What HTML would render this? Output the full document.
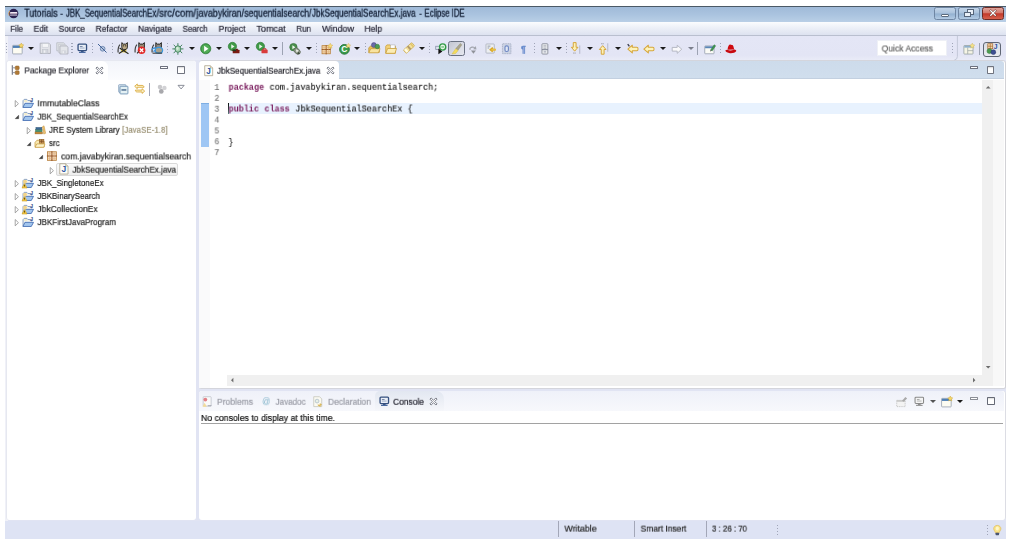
<!DOCTYPE html>
<html lang="en"><head><meta charset="utf-8"><title>Tutorials - JBK_SequentialSearchEx/src/com/javabykiran/sequentialsearch/JbkSequentialSearchEx.java - Eclipse IDE</title>
<style>
html,body{margin:0;padding:0;background:#fff}
body{width:1011px;height:544px;position:relative;overflow:hidden;font-family:"Liberation Sans",sans-serif}
div,span,svg{position:absolute;box-sizing:border-box}
.t{white-space:pre;line-height:14px;height:14px;transform-origin:0 50%;will-change:transform;-webkit-text-stroke:0.2px currentColor}
.m{font-family:'Liberation Mono',monospace;-webkit-text-stroke:0.12px currentColor}
.b{font-weight:bold;-webkit-text-stroke:0}
.h{-webkit-text-stroke:0.28px currentColor}
svg{overflow:visible}
.ds{width:1.4px;height:10px;background:repeating-linear-gradient(#a0a5b8 0 1.1px,transparent 1.1px 2.9px)}
.ss{width:1px;height:13px;background:#9da3b3}
.ar{width:0;height:0;border-left:3px solid transparent;border-right:3px solid transparent;border-top:3.2px solid #1a1a1a}
#w{left:0;top:0;width:1011px;height:544px;filter:blur(0.3px)}
#x{left:0;top:0;width:1011px;height:544px}
.g{left:0;top:0}
</style></head><body><div id="w">
<div style="left:5px;top:6px;width:1000.6px;height:533px;background:#e1e4f3"></div>
<div style="left:5px;top:6px;width:1001px;height:16.3px;background:linear-gradient(#a0bad8 0%,#aac3df 50%,#b9cfe6 100%);border-top:1px solid #4b5966"></div>
<div style="left:5px;top:22.3px;width:1001px;height:13.5px;background:linear-gradient(#fbfcfe 0%,#eef1f8 40%,#dde2f0 100%);border-bottom:1px solid #b9bfcf"></div>
<div style="left:5px;top:35.8px;width:1001px;height:24.5px;background:linear-gradient(#e4e6f6 0%,#e3e5f5 80%,#e9ebf7 100%)"></div>
<div style="left:5px;top:520.6px;width:1001px;height:18.2px;background:#dee3f4"></div>
<svg style="left:7.5px;top:8.1px" width="11.2" height="11.2" viewBox="0 0 16 16"><circle cx="8" cy="8" r="6.8" fill="#2a2050"/><path d="M1.500 10.800a7 7 0 0 1 1-6.600" stroke="#e8a04a" stroke-width="1.200" fill="none"/><rect x="2.800" y="5.700" width="10.600" height="1.500" rx="0.700" fill="#efe9f4"/><rect x="2.400" y="7.600" width="11.200" height="1.500" rx="0.700" fill="#e6cfe0"/><rect x="2.800" y="9.500" width="10.600" height="1.400" rx="0.700" fill="#efe9f4"/></svg>
<div style="left:933.5px;top:7.4px;width:22.0px;height:12.2px;border:1px solid #6f86a3;border-radius:2.5px;background:linear-gradient(#c3d5e9 0%,#aac2dc 48%,#92b0d0 52%,#b3cbe4 100%)"></div>
<div style="left:941px;top:14px;width:8px;height:3px;border:1px solid #5b6b7e;background:#fff;border-radius:1px"></div>
<div style="left:957.8px;top:7.4px;width:22.0px;height:12.2px;border:1px solid #6f86a3;border-radius:2.5px;background:linear-gradient(#c3d5e9 0%,#aac2dc 48%,#92b0d0 52%,#b3cbe4 100%)"></div>
<div style="left:967.4px;top:9.4px;width:6.2px;height:5.2px;border:1px solid #56657a;border-top-width:1.5px;background:#e9f0f8"></div>
<div style="left:964.4px;top:12px;width:6.2px;height:5.4px;border:1px solid #56657a;border-top-width:1.5px;background:#e9f0f8"></div>
<div style="left:982.1px;top:7.4px;width:22.4px;height:12.2px;border:1px solid #6d2b25;border-radius:2.5px;background:linear-gradient(#e0a39a 0%,#d4786b 45%,#c2392a 52%,#d6604d 100%)"></div>
<svg style="left:989.3px;top:9.4px" width="8" height="8" viewBox="0 0 16 16"><path d="M3.5 3.5l9 9M12.5 3.5l-9 9" stroke="#5a2a26" stroke-width="4.2" stroke-linecap="square"/><path d="M3.5 3.5l9 9M12.5 3.5l-9 9" stroke="#fff" stroke-width="2.6" stroke-linecap="square"/></svg>
<div style="left:5px;top:36px;width:2.5px;height:484.5px;background:#f0f1f8"></div>
<div style="left:6px;top:60.2px;width:189.8px;height:460.1px;background:#fff;border:1px solid #e6e8f0;border-right:none;border-bottom:none;border-radius:3px 3px 3px 3px"></div>
<div style="left:6.5px;top:60.7px;width:189.3px;height:19.3px;background:linear-gradient(#f3f5fa,#fbfcfe);border-radius:3px 3px 0 0"></div>
<div style="left:6.5px;top:60.7px;width:101.5px;height:19.3px;background:#fff;border-radius:3px 6px 0 0"></div>
<div style="left:198.5px;top:60.2px;width:807.1px;height:328.7px;background:#fff;border:1px solid #d4d5dc;border-left:0.6px solid #d9dcea;border-right:1.4px solid #d2d2d6;border-radius:3.5px 3.5px 2.5px 2.5px"></div>
<div style="left:199px;top:61px;width:805.3px;height:18px;background:linear-gradient(#cddbeb,#d0deed);border-radius:3px 3px 0 0;border-bottom:1px solid #c3d0e0"></div>
<div style="left:199px;top:61px;width:140px;height:18.5px;background:#fff;border-radius:3px 4px 0 0"></div>
<div style="left:199.1px;top:79.5px;width:11.4px;height:308.3px;background:#fafafb"></div>
<div style="left:229px;top:103px;width:753px;height:11.3px;background:#e8f2fe"></div>
<div style="left:201px;top:103px;width:8px;height:43.6px;background:#9ec6f4;border-top:1px solid #7eaee3"></div>
<div style="left:228.2px;top:103.2px;width:1.1px;height:10.6px;background:linear-gradient(#111,#2a3a3a 50%,#5c8c84)"></div>
<div style="left:982px;top:79.5px;width:11.2px;height:306.1px;background:#f0f0f0"></div>
<div style="left:993.2px;top:79.5px;width:11.0px;height:306.1px;background:#f8f8f8"></div>
<div style="left:227px;top:375.2px;width:755px;height:10.4px;background:#f0f0f0"></div>
<svg style="left:984.8px;top:84.2px" width="6.4" height="6.4" viewBox="0 0 16 16"><path d="M2 11l6-6 6 6z" fill="#6c6c6c"/></svg>
<svg style="left:984.7px;top:364.2px" width="6.4" height="6.4" viewBox="0 0 16 16"><path d="M2 5l6 6 6-6z" fill="#6c6c6c"/></svg>
<svg style="left:229.4px;top:377.0px" width="6.4" height="6.4" viewBox="0 0 16 16"><path d="M11 2l-6 6 6 6z" fill="#6c6c6c"/></svg>
<svg style="left:971.4px;top:377.0px" width="6.4" height="6.4" viewBox="0 0 16 16"><path d="M5 2l6 6-6 6z" fill="#6c6c6c"/></svg>
<div style="left:198.5px;top:390.6px;width:807.1px;height:129.7px;background:#fff;border-right:1.2px solid #dcdde4;border-radius:3px"></div>
<div style="left:198.5px;top:390.6px;width:805.9px;height:20.4px;background:linear-gradient(#eff1f9,#f7f8fc);border-radius:3px 3px 0 0"></div>
<div style="left:375px;top:391px;width:69px;height:20px;background:linear-gradient(#e2e7f1,#f6f7fb);border-radius:5px 8px 0 0"></div>
<div style="left:201px;top:423px;width:802px;height:1px;background:#a2a2a2"></div>
<div class="ds" style="left:6.0px;top:43.0px;height:12px"></div>
<svg style="left:11.9px;top:42.5px" width="11.8" height="11.8" viewBox="0 0 16 16"><rect x="0.8" y="3.2" width="13" height="11.6" rx="0.8" fill="#fdfcf2" stroke="#8c97a8" stroke-width="1"/><rect x="1.3" y="3.7" width="12" height="3" fill="#4f7fb5"/><path d="M12.6 0l1.1 2.2 2.3.4-1.7 1.7.4 2.4-2.1-1.1-2.1 1.1.4-2.4-1.7-1.7 2.3-.4z" fill="#f5d76a" stroke="#c9a23a" stroke-width="0.6"/></svg>
<div class="ar" style="left:27.9px;top:47.199999999999996px"></div>
<svg style="left:38.7px;top:42.4px" width="12.6" height="12.6" viewBox="0 0 16 16"><path d="M1.5 1.5h11l2 2v11h-13z" fill="#e4e5ea" stroke="#aeb0ba" stroke-width="1.2"/><rect x="4" y="2" width="8" height="4.6" fill="#f4f5f7" stroke="#c3c6cf" stroke-width="0.6"/><rect x="4.4" y="9.4" width="7" height="5" fill="#d3d6dd" stroke="#bcbfc8" stroke-width="0.6"/><rect x="6" y="10.6" width="2" height="3" fill="#f0f1f4"/></svg>
<svg style="left:55.7px;top:42.4px" width="12.6" height="12.6" viewBox="0 0 16 16"><path d="M1 1h8.6l1.6 1.6v8.6H1z" fill="#e6e8ec" stroke="#b4b7c0" stroke-width="1"/><path d="M3 3h8.6l1.6 1.6v8.6H3z" fill="#e6e8ec" stroke="#bfc2cb" stroke-width="0.9"/><path d="M5 5h8.6l1.6 1.6v8.6H5z" fill="#e3e5ea" stroke="#aeb0ba" stroke-width="1.1"/><rect x="7" y="10.6" width="6" height="4.2" fill="#d3d6dd"/><rect x="8.4" y="11.6" width="1.6" height="2.6" fill="#f0f1f4"/></svg>
<div class="ds" style="left:71.3px;top:43.0px;height:12px"></div>
<svg style="left:77.1px;top:42.8px" width="10.6" height="10.6" viewBox="0 0 16 16"><rect x="1.6" y="1.8" width="12.8" height="9.6" rx="1.4" fill="#e9eef6" stroke="#35507f" stroke-width="2"/><rect x="4.4" y="4.6" width="4" height="1.2" fill="#5b6f95"/><rect x="4.4" y="7" width="7" height="1.2" fill="#8a9bb9"/><rect x="6" y="12" width="4" height="1.6" fill="#35507f"/><rect x="3" y="13.4" width="10" height="1.8" rx="0.6" fill="#4a6aa0"/></svg>
<div class="ds" style="left:91.8px;top:43.0px;height:12px"></div>
<svg style="left:97.15px;top:43.35px" width="10.5" height="10.5" viewBox="0 0 16 16"><circle cx="8.6" cy="8.8" r="3.6" fill="#b8c6de" stroke="#5876a6" stroke-width="1.2"/><path d="M1.5 1.5l13 13" stroke="#3e5f95" stroke-width="1.5"/></svg>
<div class="ds" style="left:112.1px;top:43.0px;height:12px"></div>
<svg style="left:116.8px;top:42.2px" width="12.4" height="12.4" viewBox="0 0 16 16"><path d="M3.800 3.400C1.600 5.600 1.200 9.600 1.400 13.600" stroke="#3c3c3c" stroke-width="1.500" fill="none"/><path d="M6.200 6.600V0.800l2 1.900h3.200l2-1.900v5.800c0 2-1.400 3.400-3.600 3.400s-3.600-1.400-3.600-3.400z" fill="#b9a784" stroke="#1c1c1c" stroke-width="1.200" stroke-linejoin="round"/><circle cx="8.600" cy="5" r="0.700" fill="#111"/><circle cx="11.200" cy="5" r="0.700" fill="#111"/><path d="M4.400 8.400l4.400 3.600 3.600-2.600-.8 4.200-5.600-.4z" fill="#e2c63a"/><path d="M3.400 7.800L14.800 15.200M11.400 9.400L2.400 14.800" stroke="#2a2a20" stroke-width="1.500"/></svg>
<svg style="left:134.2px;top:42.2px" width="12.4" height="12.4" viewBox="0 0 16 16"><path d="M3.800 3.400C1.600 5.600 1.200 9.600 1.400 13.600" stroke="#3c3c3c" stroke-width="1.500" fill="none"/><path d="M6.200 6.600V0.800l2 1.900h3.200l2-1.900v5.800c0 2-1.400 3.400-3.600 3.400s-3.600-1.400-3.600-3.400z" fill="#9c8f78" stroke="#1c1c1c" stroke-width="1.200" stroke-linejoin="round"/><circle cx="9.800" cy="10.600" r="4.900" fill="#e12828"/><path d="M7.600 8.400l4.400 4.400M12 8.400l-4.400 4.400" stroke="#fff" stroke-width="1.700"/><path d="M4 14.600l2-2.200" stroke="#2a2a20" stroke-width="1.400"/></svg>
<svg style="left:151.2px;top:42.2px" width="12.4" height="12.4" viewBox="0 0 16 16"><path d="M3.800 3.400C1.600 5.600 1.200 9.600 1.400 13.600" stroke="#3c3c3c" stroke-width="1.500" fill="none"/><path d="M6.200 6.600V0.800l2 1.900h3.200l2-1.900v5.800c0 2-1.400 3.400-3.600 3.400s-3.600-1.400-3.600-3.400z" fill="#8f8a84" stroke="#1c1c1c" stroke-width="1.200" stroke-linejoin="round"/><path d="M1.400 10.400a2.800 2.800 0 0 1 5-1.600" stroke="#3d8fd8" stroke-width="1.700" fill="none"/><ellipse cx="10.200" cy="10.600" rx="4.800" ry="3.800" fill="#a9a08c" stroke="#3d9ae0" stroke-width="1.600"/><path d="M2 14.400h12.400" stroke="#2a2a2a" stroke-width="1.300"/><path d="M3 12.400l3-1.600" stroke="#3d8fd8" stroke-width="1.500"/></svg>
<div class="ds" style="left:166.5px;top:43.0px;height:12px"></div>
<svg style="left:172.1px;top:42.7px" width="11.8" height="11.8" viewBox="0 0 16 16"><g stroke="#3d7f5a" stroke-width="1.3" stroke-linecap="round"><path d="M8 0.8v3M8 12.6v2.8M1 8h3M12 8h3M2.6 2.8l2.6 2.6M13.4 2.8l-2.6 2.6M2.6 13.4l2.6-2.8M13.4 13.4l-2.6-2.8"/></g><ellipse cx="8" cy="8.2" rx="3.9" ry="4.4" fill="#a9d3b4" stroke="#3d7f5a" stroke-width="1.2"/><ellipse cx="7.4" cy="7.4" rx="1.6" ry="2" fill="#d8eedd"/></svg>
<div class="ar" style="left:188.6px;top:47.199999999999996px"></div>
<svg style="left:199.9px;top:42.7px" width="11.4" height="11.4" viewBox="0 0 16 16"><circle cx="8" cy="8" r="7.2" fill="#3f9a47" stroke="#2d7a36" stroke-width="1"/><circle cx="8" cy="8" r="5.6" fill="#52ad57"/><path d="M5.8 3.8l6 4.2-6 4.2z" fill="#fff"/></svg>
<div class="ar" style="left:216.4px;top:47.199999999999996px"></div>
<svg style="left:227.5px;top:42.3px" width="11.8" height="11.8" viewBox="0 0 16 16"><circle cx="6" cy="6" r="5.6" fill="#3f9a47" stroke="#2d7a36" stroke-width="0.9"/><path d="M4.4 3l4.4 3-4.4 3z" fill="#eaf6ea"/><rect x="6.4" y="10.6" width="9.2" height="4.8" rx="0.6" fill="#7a1b12"/><rect x="6.2" y="10.2" width="4.6" height="2.2" fill="#1d3a1f"/><rect x="10.4" y="9.2" width="3" height="1.6" fill="#5a1610"/></svg>
<div class="ar" style="left:244px;top:47.199999999999996px"></div>
<svg style="left:255.9px;top:42.3px" width="11.8" height="11.8" viewBox="0 0 16 16"><circle cx="6" cy="6" r="5.6" fill="#3f9a47" stroke="#2d7a36" stroke-width="0.9"/><path d="M4.4 3l4.4 3-4.4 3z" fill="#eaf6ea"/><rect x="7.4" y="10.2" width="8.4" height="5.2" rx="1.2" fill="#d93b3b"/><path d="M9.6 10.4v-1.2h4v1.2" stroke="#c02e2e" stroke-width="1.3" fill="none"/></svg>
<div class="ar" style="left:272px;top:47.199999999999996px"></div>
<div class="ss" style="left:282.1px;top:41.699999999999996px;height:13.4px"></div>
<svg style="left:289.1px;top:42.5px" width="11.8" height="11.8" viewBox="0 0 16 16"><circle cx="6" cy="5.6" r="5" fill="#4a8f4c" stroke="#356f3a" stroke-width="0.9"/><path d="M4.6 3l4 2.8-4 2.8z" fill="#eef7ee"/><ellipse cx="11" cy="11" rx="5" ry="3.4" transform="rotate(45 11 11)" fill="#8f9a8a" stroke="#566050" stroke-width="0.9"/><path d="M9.4 8.6l3.8 1.8-3 2.6z" fill="#f4f6f2"/><path d="M13 12l2 3h-4z" fill="#3d4a3a"/></svg>
<div class="ar" style="left:305.6px;top:47.199999999999996px"></div>
<div class="ds" style="left:315.5px;top:43.0px;height:12px"></div>
<svg style="left:320.5px;top:42.5px" width="11.8" height="11.8" viewBox="0 0 16 16"><rect x="1.4" y="3.6" width="11.2" height="11" fill="#f6dcb4" stroke="#b8803a" stroke-width="1.1"/><path d="M1 8.8h12M7 3v12.4" stroke="#9a5a22" stroke-width="1.3"/><path d="M1.4 6h11M4.2 3.6v11M10 3.6v11M1.4 12h11" stroke="#d8a266" stroke-width="0.6"/><path d="M12.6 0.4l1.1 2.2 2.3.4-1.7 1.7.4 2.4-2.1-1.1-2.1 1.1.4-2.4-1.7-1.7 2.3-.4z" fill="#f7dc7a" stroke="#d1a944" stroke-width="0.6"/></svg>
<svg style="left:338.7px;top:42.5px" width="11.8" height="11.8" viewBox="0 0 16 16"><circle cx="7.4" cy="8.6" r="6.6" fill="#3a9c4a" stroke="#1f6f34" stroke-width="1.2"/><text x="3.200" y="12.800" font-family="Liberation Sans, sans-serif" font-weight="bold" font-size="11.500" fill="#fff">C</text><path d="M12.8 0.4l1 2 2.1.3-1.5 1.5.4 2.2-2-1-2 1 .4-2.2-1.5-1.5 2.1-.3z" fill="#f7e08a" stroke="#cfae4a" stroke-width="0.5"/></svg>
<div class="ar" style="left:354.4px;top:47.199999999999996px"></div>
<div class="ds" style="left:364.5px;top:43.0px;height:12px"></div>
<svg style="left:368.2px;top:42.2px" width="12.4" height="12.4" viewBox="0 0 16 16"><path d="M1 7.4l2.4-2.2h4l1.4 1.4h5.8v6.8H1z" fill="#e8bf5a" stroke="#b98e2c" stroke-width="0.9"/><path d="M1 14l2.6-5.4h12L13.4 14z" fill="#f8e3a0" stroke="#c59a36" stroke-width="0.9"/><circle cx="7.6" cy="4" r="3.2" fill="#6a6aa8" stroke="#4b4b86" stroke-width="0.7"/><circle cx="12" cy="5.8" r="2.9" fill="#4f9c52" stroke="#2f7a38" stroke-width="0.7"/></svg>
<svg style="left:384.7px;top:42.8px" width="11.8" height="11.8" viewBox="0 0 16 16"><path d="M1 4.4l1.6-1.8h4.2l1.4 1.6h6v9.6H1z" fill="#f3d27a" stroke="#c79a30" stroke-width="1"/><rect x="7.6" y="2.6" width="6" height="5" fill="#fdfdfd" stroke="#a8a8a8" stroke-width="0.7"/><path d="M1 14l2.6-6.6h12L13.6 14z" fill="#fbecb4" stroke="#c79a30" stroke-width="1"/></svg>
<svg style="left:403.0px;top:42.4px" width="12" height="12" viewBox="0 0 16 16"><g transform="rotate(-42 8 8)"><rect x="0.4" y="5" width="15.2" height="6" rx="1.2" fill="#f5e19a" stroke="#c4a550" stroke-width="0.9"/><rect x="1.6" y="5.4" width="3" height="5.2" fill="#fffbe6"/><rect x="7" y="5" width="2.6" height="6" fill="#b39a6a"/><rect x="12.4" y="5.4" width="2" height="5.2" fill="#e2c56a"/></g></svg>
<div class="ar" style="left:419.4px;top:47.199999999999996px"></div>
<div class="ds" style="left:428.9px;top:43.0px;height:12px"></div>
<svg style="left:434.5px;top:42.5px" width="11.8" height="11.8" viewBox="0 0 16 16"><rect x="1" y="4.4" width="6" height="4.4" fill="#dfe3ee" stroke="#7f8aa3" stroke-width="1"/><circle cx="10.4" cy="5.4" r="4.2" fill="#e6f5e4" stroke="#2f9a45" stroke-width="1.9"/><path d="M8.6 5.4h3.6" stroke="#2f9a45" stroke-width="1.2"/><path d="M4.6 7.4l5.4 4-5.4 4z" fill="#111"/></svg>
<div style="left:448.2px;top:41px;width:16.8px;height:14.8px;border:1.2px solid #6a7182;border-radius:2.5px;background:linear-gradient(135deg,#c3c6d1,#dddfe8 70%,#e4e6ee)"></div>
<svg style="left:451.3px;top:42.7px" width="11.4" height="11.4" viewBox="0 0 16 16"><path d="M13 0.6l2.2 2-5.4 7.6-3-2.4z" fill="#a9a48c" stroke="#8a866e" stroke-width="0.6"/><path d="M6.600 8l3.400 2.600-3.600 4.200-5 .6z" fill="#f4dc5c" stroke="#d2b63c" stroke-width="0.6"/></svg>
<svg style="left:468.3px;top:43.5px" width="10.6" height="10.6" viewBox="0 0 16 16"><path d="M2 6.4c2-3 6-3.4 8.4-1.6l1.4-1.6 1 5-5-.4 1.4-1.6c-2-1.2-4.4-.8-5.6.8z" fill="#a2a5ad"/><path d="M4.400 9.800h7.600l-3.800 4.800z" fill="#8f9299"/><circle cx="3" cy="7.400" r="1.500" fill="#b4b7bf"/></svg>
<svg style="left:484.7px;top:42.7px" width="11.4" height="11.4" viewBox="0 0 16 16"><rect x="1.4" y="1.400" width="11.600" height="12.800" rx="0.8" fill="#eceef2" stroke="#a2a8b4" stroke-width="1"/><path d="M3.600 4.400h4M3.600 7h2.400" stroke="#7d879a" stroke-width="1.100"/><path d="M15 9.400H9.400M11 6.600L7.600 9.400l3.400 2.800" stroke="#d8a626" stroke-width="2.400" fill="none"/><path d="M9 8.200h6v2.400H9z" fill="#e9bf3e"/></svg>
<svg style="left:501.3px;top:42.7px" width="11.4" height="11.4" viewBox="0 0 16 16"><rect x="2" y="1" width="12" height="14" rx="0.6" fill="#ccd3e4" stroke="#9ba4ba" stroke-width="1" stroke-dasharray="1.6 0.8"/><rect x="5.600" y="4" width="4.800" height="8" rx="2" fill="#dfe6f5" stroke="#7089c4" stroke-width="1.6"/></svg>
<span class="t" style="left:521px;top:42.2px;font-size:8.6px;font-weight:bold;color:#6589cb;-webkit-text-stroke:0.3px #6589cb">¶</span>
<div class="ds" style="left:533.9px;top:43.0px;height:12px"></div>
<svg style="left:539.1px;top:42.5px" width="11.8" height="11.8" viewBox="0 0 16 16"><rect x="4" y="1" width="8" height="14" rx="1" fill="#eceef1" stroke="#7f8491" stroke-width="1.1"/><path d="M6 4h4M6 7h4" stroke="#7f8491" stroke-width="1"/><path d="M4 9h8" stroke="#70778a" stroke-width="1.2"/><rect x="6.4" y="10.6" width="3.2" height="2.4" fill="#b9bdc8"/></svg>
<div class="ar" style="left:555.6px;top:47.199999999999996px"></div>
<div class="ds" style="left:565.5px;top:43.0px;height:12px"></div>
<svg style="left:569.1px;top:42.1px" width="11.8" height="11.8" viewBox="0 0 16 16"><path d="M5.800 0.800h3.800v6.400h2.600L7.700 12.400 3.200 7.200h2.600z" fill="#fdf1b4" stroke="#d4a336" stroke-width="1.300" stroke-linejoin="round"/><path d="M6 15h3.600" stroke="#555" stroke-width="1" stroke-dasharray="1 0.800"/><path d="M14.600 4.600v11.400" stroke="#a3a8b8" stroke-width="1"/></svg>
<div class="ar" style="left:587px;top:47.199999999999996px"></div>
<svg style="left:596.9px;top:42.7px" width="11.8" height="11.8" viewBox="0 0 16 16"><path d="M5.800 15.200h3.800V8.800h2.600L7.700 3.600 3.200 8.800h2.600z" fill="#fdf1b4" stroke="#d4a336" stroke-width="1.300" stroke-linejoin="round"/><path d="M6 1h3.600" stroke="#555" stroke-width="1" stroke-dasharray="1 0.800"/><path d="M14.600 0.400v11.400" stroke="#a3a8b8" stroke-width="1"/></svg>
<div class="ar" style="left:615px;top:47.199999999999996px"></div>
<svg style="left:626.5px;top:42.5px" width="11.8" height="11.8" viewBox="0 0 16 16"><path d="M1.200 8.200L7.200 3v2.800h6c1.200 0 1.800 1 1.800 2.400s-.6 2.400-1.800 2.400h-6v2.800z" fill="#fdf3ba" stroke="#d6a63a" stroke-width="1.400" stroke-linejoin="round"/><path d="M1 1.600l2.200 3" stroke="#3a3a4a" stroke-width="1.800"/></svg>
<svg style="left:643.1px;top:42.5px" width="11.8" height="11.8" viewBox="0 0 16 16"><path d="M1.200 8.200L7.200 3v2.800h6c1.200 0 1.800 1 1.800 2.400s-.6 2.400-1.800 2.400h-6v2.800z" fill="#fdf3ba" stroke="#d6a63a" stroke-width="1.400" stroke-linejoin="round"/></svg>
<div class="ar" style="left:659.6px;top:47.199999999999996px"></div>
<svg style="left:671.1px;top:42.5px" width="11.8" height="11.8" viewBox="0 0 16 16"><path d="M14.6 8.4L8.4 3v3H1.6v5h6.8v3z" fill="#f9f9fb" stroke="#b0b3be" stroke-width="1.200" stroke-linejoin="round"/></svg>
<div class="ar" style="left:687.6px;top:47.199999999999996px;border-top-color:#7b7f8c"></div>
<div class="ss" style="left:697.3px;top:41.699999999999996px;height:13.4px"></div>
<svg style="left:703.7px;top:42.9px" width="11.8" height="11.8" viewBox="0 0 16 16"><rect x="1" y="4" width="12.6" height="10.6" rx="0.8" fill="#fbfbf6" stroke="#8e98a8" stroke-width="1"/><rect x="1.5" y="4.5" width="11.6" height="2.6" fill="#5b86b8"/><path d="M9 9.400l4.800-7 2 1.400-4.600 6.800z" fill="#3d9650" stroke="#276f38" stroke-width="0.6"/><path d="M9 9.400l-.6 2.200 2-1z" fill="#222"/></svg>
<div class="ds" style="left:719.9px;top:43.0px;height:12px"></div>
<svg style="left:724.8px;top:42.6px" width="11.6" height="11.6" viewBox="0 0 16 16"><path d="M3.6 9.400c.2-3.800 1.400-6.800 3.200-7.200 1.200-.2 1.800.8 3 .6 1.400-.2 2.200 2.600 2.800 6z" fill="#cf0a10"/><path d="M0.400 10.400c1.600-1.400 3-1.400 3.600-.6 2.400 1 6 .6 8.600-.800 1.600-.2 3 1 3 2-1.400 2.400-5.600 3.400-8.800 3-3-.4-6-1.800-6.400-3.600z" fill="#c80a10"/></svg>
<div style="left:877.4px;top:40.2px;width:70.0px;height:15.4px;background:#fff;border:0.6px solid #eef0f6"></div>
<div class="ds" style="left:952.1px;top:43.0px;height:12px"></div>
<svg style="left:954px;top:36px" width="6" height="24" viewBox="0 0 6 24"><path d="M3.4 0v20.500q0 3 -3 3.500" stroke="#c3c8d8" stroke-width="1" fill="none"/></svg>
<svg style="left:962.5px;top:42.9px" width="11.8" height="11.8" viewBox="0 0 16 16"><rect x="1.2" y="3.4" width="12.400" height="11.600" rx="0.8" fill="#f6f5e6" stroke="#8f9a9a" stroke-width="1"/><rect x="1.7" y="3.9" width="11.400" height="2.400" fill="#8fb0cf"/><path d="M6.400 6.300v8.700M6.400 10.400h7.200" stroke="#9aa3a3" stroke-width="1"/><path d="M12.600 0.200l1.100 2.200 2.300.4-1.700 1.700.4 2.400-2.100-1.100-2.100 1.100.4-2.400-1.700-1.700 2.300-.4z" fill="#f5e28a" stroke="#cdb457" stroke-width="0.6"/></svg>
<div class="ss" style="left:979.1px;top:42.8px;height:12px"></div>
<div style="left:983.4px;top:42px;width:17.2px;height:14.6px;border:1px solid #5f6674;border-radius:3px;background:linear-gradient(#dadde5,#e9ebf1)"></div>
<svg style="left:986.0px;top:43.3px" width="12" height="12" viewBox="0 0 16 16"><rect x="2.400" y="1" width="6.600" height="6.600" fill="#f3d9b0" stroke="#a5642a" stroke-width="0.9"/><path d="M2.400 4.300h6.600M5.700 1v6.600" stroke="#a5642a" stroke-width="0.9"/><text x="10.200" y="7.600" font-family="Liberation Sans, sans-serif" font-weight="bold" font-size="9" fill="#2c4f9e">J</text><circle cx="4.600" cy="10.800" r="3.300" fill="#4c9b50" stroke="#2d7535" stroke-width="0.700"/><circle cx="9.800" cy="12.200" r="3.200" fill="#3e4f93" stroke="#2b3870" stroke-width="0.700"/></svg>
<svg style="left:11px;top:65px" width="10" height="10" viewBox="0 0 10 10"><path d="M1.300 0.300v9.500" stroke="#6c6f7c" stroke-width="1.100"/><path d="M1.300 2.800h3M1.300 7.600h3" stroke="#8a8d98" stroke-width="0.900"/><rect x="4.200" y="1" width="4" height="3.700" rx="1" fill="#b07a36" stroke="#94642a" stroke-width="0.500"/><rect x="4.200" y="5.800" width="4" height="3.700" rx="1" fill="#b07a36" stroke="#94642a" stroke-width="0.500"/></svg>
<svg style="left:95.5px;top:67.0px" width="7" height="7" viewBox="0 0 16 16"><path transform="rotate(45 8 8)" d="M6.100 -1.600h3.800v7.700h7.700v3.800h-7.700v7.700h-3.800v-7.700h-7.700v-3.800h7.700z" fill="#fbfbfd" stroke="#6c707a" stroke-width="1.900" stroke-linejoin="round"/></svg>
<div style="left:160px;top:66.2px;width:8px;height:2.8px;border:1px solid #6d717e;background:#fff;border-radius:0.5px"></div>
<div style="left:177.3px;top:65.9px;width:7.3px;height:8.2px;border:1px solid #70747f;border-top-width:1.7px;background:linear-gradient(#d8d8d8 0,#fff 30%);border-radius:0.8px"></div>
<svg style="left:117.7px;top:83.7px" width="10.6" height="10.6" viewBox="0 0 16 16"><rect x="1" y="1" width="11" height="11.600" rx="1" fill="#dfe9f3" stroke="#6f8fb0" stroke-width="1"/><rect x="3" y="3.400" width="12" height="11.600" rx="1" fill="#e4f1f4" stroke="#5f86aa" stroke-width="1.200"/><rect x="5.200" y="8" width="7.400" height="2" fill="#3d5f86"/></svg>
<svg style="left:133.9px;top:83.3px" width="11.4" height="11.4" viewBox="0 0 16 16"><path d="M1 4.600L4.600 1.400v2h6.800c2 0 2.600 1.200 2.600 2.600h-9.400v2z" fill="#fdf4cc" stroke="#d8a636" stroke-width="1.200" stroke-linejoin="round"/><path d="M15 11.400l-3.600 3.200v-2H4.600c-2 0-2.600-1.200-2.600-2.600h9.400v-2z" fill="#fdf4cc" stroke="#d8a636" stroke-width="1.200" stroke-linejoin="round"/></svg>
<div class="ss" style="left:149.1px;top:82.9px;height:13px;background:#a3a7b8"></div>
<svg style="left:157.4px;top:84.4px" width="10.4" height="10.4" viewBox="0 0 16 16"><circle cx="4.600" cy="4.600" r="3.400" fill="#c9c9cc"/><circle cx="11.400" cy="6" r="3.400" fill="#d2d2d5"/><circle cx="6.600" cy="11.400" r="3.600" fill="#a8a8ac"/></svg>
<svg style="left:176.9px;top:83.1px" width="8.2" height="8.2" viewBox="0 0 16 16"><path d="M2 4.600h12l-6 7z" fill="#fff" stroke="#7a7e8a" stroke-width="1.700" stroke-linejoin="round"/></svg>
<div style="left:55.6px;top:163.15px;width:122.4px;height:12.6px;border:1px solid #d9d9d9;border-radius:2px;background:linear-gradient(#fbfbfb,#eeeeee)"></div>
<svg style="left:13.4px;top:100.4px" width="7.4" height="7.4" viewBox="0 0 16 16"><path d="M4.800 1.200l7 6.800-7 6.800z" fill="#fff" stroke="#8e8e8e" stroke-width="1.700" stroke-linejoin="round"/></svg>
<svg style="left:22.1px;top:96.9px" width="11.8" height="11.8" viewBox="0 0 16 16"><path d="M1.400 13.600V5l1.600-1.800h3.600l1.400 1.600h5v2.600" fill="#f4f6f4" stroke="#6f8db8" stroke-width="1.100"/><path d="M3 4.600h3.400l1 1.400H3z" fill="#f3e3a4"/><path d="M1.200 14.200l2.800-5.600h11.600l-3 5.600z" fill="#a3c6ee" stroke="#456fb4" stroke-width="1.200" stroke-linejoin="round"/><text x="11" y="6.400" font-family="Liberation Sans, sans-serif" font-size="8.400" fill="#3f5890" stroke="#3f5890" stroke-width="0.300">J</text></svg>
<svg style="left:14.2px;top:114.1px" width="5.6" height="5.6" viewBox="0 0 16 16"><path d="M13.400 3.400v10h-10z" fill="#404040" stroke="#262626" stroke-width="1"/></svg>
<svg style="left:22.1px;top:110.2px" width="11.8" height="11.8" viewBox="0 0 16 16"><path d="M1.400 13.600V5l1.600-1.800h3.600l1.400 1.600h5v2.600" fill="#f4f6f4" stroke="#6f8db8" stroke-width="1.100"/><path d="M3 4.600h3.400l1 1.400H3z" fill="#f3e3a4"/><path d="M1.200 14.200l2.800-5.600h11.600l-3 5.600z" fill="#a3c6ee" stroke="#456fb4" stroke-width="1.200" stroke-linejoin="round"/><text x="11" y="6.400" font-family="Liberation Sans, sans-serif" font-size="8.400" fill="#3f5890" stroke="#3f5890" stroke-width="0.300">J</text></svg>
<svg style="left:25.4px;top:126.95px" width="7.4" height="7.4" viewBox="0 0 16 16"><path d="M4.800 1.200l7 6.800-7 6.800z" fill="#fff" stroke="#8e8e8e" stroke-width="1.700" stroke-linejoin="round"/></svg>
<svg style="left:33.5px;top:123.45px" width="11.8" height="11.8" viewBox="0 0 16 16"><rect x="1.400" y="12" width="10" height="2.800" fill="#c08a3e" stroke="#94621e" stroke-width="0.600"/><rect x="2" y="9" width="9" height="2.800" fill="#4a9574" stroke="#2f6f50" stroke-width="0.600"/><rect x="2.600" y="6" width="8" height="2.800" fill="#3c6a96" stroke="#284c70" stroke-width="0.600"/><path d="M11.400 5.200l2.200-1.400 2.200 10.200-2.600 1z" fill="#ecc070" stroke="#c2923a" stroke-width="0.700"/></svg>
<svg style="left:26.2px;top:140.6px" width="5.6" height="5.6" viewBox="0 0 16 16"><path d="M13.400 3.400v10h-10z" fill="#404040" stroke="#262626" stroke-width="1"/></svg>
<svg style="left:33.7px;top:136.7px" width="11.8" height="11.8" viewBox="0 0 16 16"><path d="M1.400 13.600V7.400l2.600-3h3.600l1.200 1.400h5v7.800z" fill="#f9e8b0" stroke="#c99e44" stroke-width="1.100" stroke-linejoin="round"/><rect x="7.400" y="3.200" width="6" height="5.200" fill="#cf9a5e" stroke="#8f5c22" stroke-width="0.800"/><path d="M10.400 3.200v5.200M7.400 5.800h6" stroke="#70441a" stroke-width="0.900"/><path d="M1.400 14l2.400-4.600h11l-1.600 4.600z" fill="#fcf2c8" stroke="#c99e44" stroke-width="1"/></svg>
<svg style="left:37.8px;top:153.9px" width="5.6" height="5.6" viewBox="0 0 16 16"><path d="M13.400 3.400v10h-10z" fill="#404040" stroke="#262626" stroke-width="1"/></svg>
<svg style="left:45.5px;top:150.0px" width="11.8" height="11.8" viewBox="0 0 16 16"><rect x="2" y="2.400" width="12" height="11.600" fill="#f7e3c6" stroke="#b8803e" stroke-width="1.200"/><path d="M1.200 8.200h13.600M8 1.600v13.200" stroke="#96562a" stroke-width="1.500"/><path d="M2 5.200h12M2 11.200h12M5 2.400v11.600M11 2.400v11.600" stroke="#d8a470" stroke-width="0.700"/></svg>
<svg style="left:48.4px;top:166.75px" width="7.4" height="7.4" viewBox="0 0 16 16"><path d="M4.800 1.200l7 6.800-7 6.800z" fill="#fff" stroke="#8e8e8e" stroke-width="1.700" stroke-linejoin="round"/></svg>
<svg style="left:57.7px;top:163.25px" width="11.8" height="11.8" viewBox="0 0 16 16"><path d="M2.400 1h8l3.200 3.200V15H2.400z" fill="#fdfdf8" stroke="#a39a80" stroke-width="1"/><path d="M10.400 1v3.200h3.200" fill="#efe8d0" stroke="#a39a80" stroke-width="0.800"/><text x="4.600" y="12.600" font-family="Liberation Sans, sans-serif" font-weight="bold" font-size="11.500" fill="#2c57a4">J</text></svg>
<svg style="left:13.4px;top:180.05px" width="7.4" height="7.4" viewBox="0 0 16 16"><path d="M4.800 1.200l7 6.800-7 6.800z" fill="#fff" stroke="#8e8e8e" stroke-width="1.700" stroke-linejoin="round"/></svg>
<svg style="left:22.1px;top:176.55px" width="11.8" height="11.8" viewBox="0 0 16 16"><path d="M1.400 13.600V5l1.600-1.800h3.600l1.400 1.600h5v2.600" fill="#f4f6f4" stroke="#6f8db8" stroke-width="1.100"/><path d="M3 4.600h3.400l1 1.400H3z" fill="#f3e3a4"/><path d="M1.200 14.200l2.800-5.600h11.600l-3 5.600z" fill="#a3c6ee" stroke="#456fb4" stroke-width="1.200" stroke-linejoin="round"/><text x="11" y="6.400" font-family="Liberation Sans, sans-serif" font-size="8.400" fill="#3f5890" stroke="#3f5890" stroke-width="0.300">J</text><path d="M3.400 8.600l3.400 6.400H0z" fill="#f5c842" stroke="#c99a1c" stroke-width="0.700"/><path d="M3.400 10.600v2.400" stroke="#3a2a00" stroke-width="1"/><circle cx="4" cy="6.400" r="2.600" fill="#f2d48a"/></svg>
<svg style="left:13.4px;top:193.1px" width="7.4" height="7.4" viewBox="0 0 16 16"><path d="M4.800 1.200l7 6.800-7 6.800z" fill="#fff" stroke="#8e8e8e" stroke-width="1.700" stroke-linejoin="round"/></svg>
<svg style="left:22.1px;top:189.6px" width="11.8" height="11.8" viewBox="0 0 16 16"><path d="M1.400 13.600V5l1.600-1.800h3.600l1.400 1.600h5v2.600" fill="#f4f6f4" stroke="#6f8db8" stroke-width="1.100"/><path d="M3 4.600h3.400l1 1.400H3z" fill="#f3e3a4"/><path d="M1.200 14.200l2.800-5.600h11.600l-3 5.600z" fill="#a3c6ee" stroke="#456fb4" stroke-width="1.200" stroke-linejoin="round"/><text x="11" y="6.400" font-family="Liberation Sans, sans-serif" font-size="8.400" fill="#3f5890" stroke="#3f5890" stroke-width="0.300">J</text><path d="M3.400 8.600l3.400 6.400H0z" fill="#f5c842" stroke="#c99a1c" stroke-width="0.700"/><path d="M3.400 10.600v2.400" stroke="#3a2a00" stroke-width="1"/><circle cx="4" cy="6.400" r="2.600" fill="#f2d48a"/></svg>
<svg style="left:13.4px;top:206.15px" width="7.4" height="7.4" viewBox="0 0 16 16"><path d="M4.800 1.200l7 6.800-7 6.800z" fill="#fff" stroke="#8e8e8e" stroke-width="1.700" stroke-linejoin="round"/></svg>
<svg style="left:22.1px;top:202.65px" width="11.8" height="11.8" viewBox="0 0 16 16"><path d="M1.400 13.600V5l1.600-1.800h3.600l1.400 1.600h5v2.600" fill="#f4f6f4" stroke="#6f8db8" stroke-width="1.100"/><path d="M3 4.600h3.400l1 1.400H3z" fill="#f3e3a4"/><path d="M1.200 14.200l2.800-5.600h11.600l-3 5.600z" fill="#a3c6ee" stroke="#456fb4" stroke-width="1.200" stroke-linejoin="round"/><text x="11" y="6.400" font-family="Liberation Sans, sans-serif" font-size="8.400" fill="#3f5890" stroke="#3f5890" stroke-width="0.300">J</text><path d="M3.400 8.600l3.400 6.400H0z" fill="#f5c842" stroke="#c99a1c" stroke-width="0.700"/><path d="M3.400 10.600v2.400" stroke="#3a2a00" stroke-width="1"/><circle cx="4" cy="6.400" r="2.600" fill="#f2d48a"/></svg>
<svg style="left:13.4px;top:219.2px" width="7.4" height="7.4" viewBox="0 0 16 16"><path d="M4.800 1.200l7 6.800-7 6.800z" fill="#fff" stroke="#8e8e8e" stroke-width="1.700" stroke-linejoin="round"/></svg>
<svg style="left:22.1px;top:215.7px" width="11.8" height="11.8" viewBox="0 0 16 16"><path d="M1.400 13.600V5l1.600-1.800h3.600l1.400 1.600h5v2.600" fill="#f4f6f4" stroke="#6f8db8" stroke-width="1.100"/><path d="M3 4.600h3.400l1 1.400H3z" fill="#f3e3a4"/><path d="M1.200 14.200l2.800-5.600h11.600l-3 5.600z" fill="#a3c6ee" stroke="#456fb4" stroke-width="1.200" stroke-linejoin="round"/><text x="11" y="6.400" font-family="Liberation Sans, sans-serif" font-size="8.400" fill="#3f5890" stroke="#3f5890" stroke-width="0.300">J</text></svg>
<svg style="left:202.7px;top:64.6px" width="11.4" height="11.4" viewBox="0 0 16 16"><path d="M2.400 1h8l3.200 3.200V15H2.400z" fill="#fdfdf8" stroke="#a39a80" stroke-width="1"/><path d="M10.400 1v3.200h3.200" fill="#efe8d0" stroke="#a39a80" stroke-width="0.800"/><text x="4.600" y="12.600" font-family="Liberation Sans, sans-serif" font-weight="bold" font-size="11.500" fill="#2c57a4">J</text></svg>
<svg style="left:326.9px;top:67.1px" width="7" height="7" viewBox="0 0 16 16"><path transform="rotate(45 8 8)" d="M6.100 -1.600h3.800v7.700h7.700v3.800h-7.700v7.700h-3.800v-7.700h-7.700v-3.800h7.700z" fill="#fbfbfd" stroke="#6c707a" stroke-width="1.900" stroke-linejoin="round"/></svg>
<div style="left:970px;top:66.3px;width:8px;height:2.8px;border:1px solid #6d717e;background:#fff;border-radius:0.5px"></div>
<div style="left:986.9px;top:65.9px;width:7.3px;height:8.2px;border:1px solid #70747f;border-top-width:1.7px;background:linear-gradient(#d8d8d8 0,#fff 30%);border-radius:0.8px"></div>
<svg style="left:201.2px;top:395.6px" width="11.6" height="11.6" viewBox="0 0 16 16"><rect x="3" y="1" width="11" height="13" rx="0.800" fill="#fafafa" stroke="#b9bcc6" stroke-width="1"/><circle cx="6" cy="5" r="2.600" fill="#e27f86"/><path d="M5 9.400l3 5.400H2z" fill="#f3dc9a"/><path d="M9.400 13.400h5" stroke="#8a8f9c" stroke-width="1"/></svg>
<span class="t" style="left:262px;top:393.79999999999995px;font-size:8.6px;-webkit-text-stroke:0;color:#7fb2c8;transform:translate3d(0.2px,0.2px,0) scaleX(0.92)">@</span>
<svg style="left:312.2px;top:395.6px" width="11.6" height="11.6" viewBox="0 0 16 16"><path d="M2.400 1h8l3 3v10.600h-11z" fill="#fbfaf2" stroke="#c1c1b4" stroke-width="1"/><circle cx="7" cy="7" r="2.600" fill="#e8f0e6" stroke="#a9b9c8" stroke-width="1"/><path d="M8 12.400h5.200l-1.800-2v4z" fill="#f0d070" stroke="#d0a840" stroke-width="0.800"/></svg>
<svg style="left:378.7px;top:395.9px" width="10.6" height="10.6" viewBox="0 0 16 16"><rect x="1.6" y="1.8" width="12.8" height="9.6" rx="1.4" fill="#e9eef6" stroke="#35507f" stroke-width="2"/><rect x="4.4" y="4.6" width="4" height="1.2" fill="#5b6f95"/><rect x="4.4" y="7" width="7" height="1.2" fill="#8a9bb9"/><rect x="6" y="12" width="4" height="1.6" fill="#35507f"/><rect x="3" y="13.4" width="10" height="1.8" rx="0.6" fill="#4a6aa0"/></svg>
<svg style="left:430.1px;top:398.3px" width="7" height="7" viewBox="0 0 16 16"><path transform="rotate(45 8 8)" d="M6.100 -1.600h3.800v7.700h7.700v3.800h-7.700v7.700h-3.800v-7.700h-7.700v-3.800h7.700z" fill="#fbfbfd" stroke="#6c707a" stroke-width="1.900" stroke-linejoin="round"/></svg>
<svg style="left:896.2px;top:395.6px" width="11.6" height="11.6" viewBox="0 0 16 16"><rect x="1" y="6" width="11.600" height="8.600" fill="#f3f3f3" stroke="#b9b9b9" stroke-width="1" stroke-dasharray="1.500 1"/><rect x="1" y="5.600" width="11.600" height="2.400" fill="#c9c9c9"/><path d="M8.400 6.400l4.600-5 2.400 2-5 4.600z" fill="#a9a9a9"/></svg>
<svg style="left:913.7px;top:395.7px" width="10.6" height="10.6" viewBox="0 0 16 16"><rect x="1.600" y="1.800" width="12.800" height="9.600" rx="1.400" fill="#f4f4f4" stroke="#8a8a8a" stroke-width="1.600"/><rect x="4.400" y="4.600" width="4" height="1.200" fill="#9a9a9a"/><rect x="4.400" y="7" width="7" height="1.200" fill="#aaa"/><rect x="6" y="12" width="4" height="1.600" fill="#8a8a8a"/><rect x="3" y="13.400" width="10" height="1.800" rx="0.600" fill="#9a9a9a"/></svg>
<div class="ar" style="left:929.6px;top:400.4px;border-top-color:#555"></div>
<svg style="left:941.3px;top:395.7px" width="11.8" height="11.8" viewBox="0 0 16 16"><rect x="0.8" y="3.2" width="13" height="11.6" rx="0.8" fill="#fdfcf2" stroke="#8c97a8" stroke-width="1"/><rect x="1.3" y="3.7" width="12" height="3" fill="#4f7fb5"/><path d="M12.6 0l1.1 2.2 2.3.4-1.7 1.7.4 2.4-2.1-1.1-2.1 1.1.4-2.4-1.7-1.7 2.3-.4z" fill="#f5d76a" stroke="#c9a23a" stroke-width="0.6"/></svg>
<div class="ar" style="left:957.4px;top:400.4px"></div>
<div style="left:970px;top:397.3px;width:8px;height:2.8px;border:1px solid #8a8d96;background:#fff;border-radius:0.5px"></div>
<div style="left:987.3px;top:397.29999999999995px;width:7.3px;height:8.2px;border:1px solid #666a76;border-top-width:1.7px;background:linear-gradient(#d8d8d8 0,#fff 30%);border-radius:0.8px"></div>
<div class="ss" style="left:557.9px;top:520.5px;height:16.6px;background:#a3a7b8"></div>
<div class="ss" style="left:634.1px;top:520.5px;height:16.6px;background:#a3a7b8"></div>
<div class="ss" style="left:706.1px;top:520.5px;height:16.6px;background:#a3a7b8"></div>
<div class="ds" style="left:777.1px;top:524.5px;height:11px"></div>
<div class="ds" style="left:986.5px;top:524.9px;height:11px"></div>
<svg style="left:992.3px;top:524.7px" width="10.6" height="10.6" viewBox="0 0 16 16"><path d="M8 0.600c3.400 0 5.400 2.400 5.400 5 0 2.400-1.800 3.400-2.400 5.800H5c-.6-2.400-2.400-3.400-2.400-5.800 0-2.600 2-5 5.400-5z" fill="#f9e48a" stroke="#e0b84a" stroke-width="1"/><ellipse cx="8" cy="5.400" rx="2.400" ry="3" fill="#fff6c8"/><rect x="5.400" y="11.600" width="5.200" height="3.800" rx="1" fill="#4a5570"/></svg>
</div>
<div id="x">
<div class="g"><span class="t h" style="left:24px;top:6px;font-size:10px;transform:translate3d(0.3px,0.7px,0) scaleX(0.8767);color:#0e1a30">Tutorials </span><span class="t h" style="left:60px;top:6px;font-size:10px;transform:translate3d(0.2px,0.7px,0) scaleX(0.8374);color:#0e1a30">- </span><span class="t h" style="left:65px;top:6px;font-size:10px;transform:translate3d(0.8px,0.7px,0) scaleX(0.7902);color:#0e1a30">JBK_SequentialSearchEx</span><span class="t h" style="left:156px;top:6px;font-size:10px;transform:translate3d(0.5px,0.7px,0) scaleX(0.9738);color:#0e1a30">/src/com/</span><span class="t h" style="left:196px;top:6px;font-size:10px;transform:translate3d(0.5px,0.7px,0) scaleX(0.8902);color:#0e1a30">javabykiran/</span><span class="t h" style="left:244px;top:6px;font-size:10px;transform:translate3d(0.3px,0.7px,0) scaleX(0.8572);color:#0e1a30">sequentialsearch/</span><span class="t h" style="left:311px;top:6px;font-size:10px;transform:translate3d(0.9px,0.7px,0) scaleX(0.8145);color:#0e1a30">JbkSequentialSearchEx.java </span><span class="t h" style="left:419px;top:6px;font-size:10px;transform:translate3d(0.2px,0.7px,0) scaleX(0.8075);color:#0e1a30">- </span><span class="t h" style="left:424px;top:6px;font-size:10px;transform:translate3d(0.5px,0.7px,0) scaleX(0.7758);color:#0e1a30">Eclipse IDE</span></div>
<span class="t" style="left:10px;top:21px;font-size:9.6px;transform:translate3d(0.4px,0.8px,0) scaleX(0.8145);color:#1b1b2b">File</span>
<span class="t" style="left:33px;top:21px;font-size:9.6px;transform:translate3d(0.6px,0.8px,0) scaleX(0.8703);color:#1b1b2b">Edit</span>
<span class="t" style="left:58px;top:21px;font-size:9.6px;transform:translate3d(0.6px,0.8px,0) scaleX(0.8682);color:#1b1b2b">Source</span>
<span class="t" style="left:95px;top:21px;font-size:9.6px;transform:translate3d(0.6px,0.8px,0) scaleX(0.8769);color:#1b1b2b">Refactor</span>
<span class="t" style="left:138px;top:21px;font-size:9.6px;transform:translate3d(0px,0.8px,0) scaleX(0.8977);color:#1b1b2b">Navigate</span>
<span class="t" style="left:182px;top:21px;font-size:9.6px;transform:translate3d(0.6px,0.8px,0) scaleX(0.8222);color:#1b1b2b">Search</span>
<span class="t" style="left:218px;top:21px;font-size:9.6px;transform:translate3d(0.6px,0.8px,0) scaleX(0.8975);color:#1b1b2b">Project</span>
<span class="t" style="left:256px;top:21px;font-size:9.6px;transform:translate3d(0.4px,0.8px,0) scaleX(0.9443);color:#1b1b2b">Tomcat</span>
<span class="t" style="left:296px;top:21px;font-size:9.6px;transform:translate3d(0.4px,0.8px,0) scaleX(0.8291);color:#1b1b2b">Run</span>
<span class="t" style="left:322px;top:21px;font-size:9.6px;transform:translate3d(0px,0.8px,0) scaleX(0.9377);color:#1b1b2b">Window</span>
<span class="t" style="left:364px;top:21px;font-size:9.6px;transform:translate3d(0.4px,0.8px,0) scaleX(0.8918);color:#1b1b2b">Help</span>
<span class="t" style="left:881px;top:41px;font-size:9.6px;transform:translate3d(0.6px,0.5px,0) scaleX(0.8925);color:#626262">Quick Access</span>
<span class="t" style="left:24px;top:63px;font-size:9.6px;transform:translate3d(0.4px,0.4px,0) scaleX(0.853);color:#1c1c24">Package Explorer</span>
<span class="t" style="left:37px;top:96px;font-size:9.6px;transform:translate3d(0.4px,0.3px,0) scaleX(0.9014);color:#1c1c1c">ImmutableClass</span>
<span class="t" style="left:37px;top:109px;font-size:9.6px;transform:translate3d(0.4px,0.6px,0) scaleX(0.8246);color:#1c1c1c">JBK_SequentialSearchEx</span>
<div class="g"><span class="t" style="left:49px;top:122px;font-size:9.6px;transform:translate3d(0px,0.85px,0) scaleX(0.8329);color:#1c1c1c">JRE System Library </span><span class="t" style="left:122px;top:122px;font-size:9.6px;transform:translate3d(0px,0.85px,0) scaleX(0.83);color:#9a9174">[JavaSE-1.8]</span></div>
<span class="t" style="left:49px;top:136px;font-size:9.6px;transform:translate3d(0px,0.1px,0) scaleX(0.8283);color:#1c1c1c">src</span>
<span class="t" style="left:61px;top:149px;font-size:9.6px;transform:translate3d(0px,0.4px,0) scaleX(0.8996);color:#1c1c1c">com.javabykiran.sequentialsearch</span>
<span class="t" style="left:72px;top:162px;font-size:9.6px;transform:translate3d(0.4px,0.65px,0) scaleX(0.8482);color:#1c1c1c">JbkSequentialSearchEx.java</span>
<span class="t" style="left:37px;top:175px;font-size:9.6px;transform:translate3d(0.4px,0.95px,0) scaleX(0.833);color:#1c1c1c">JBK_SingletoneEx</span>
<span class="t" style="left:37px;top:189px;font-size:9.6px;transform:translate3d(0.4px,0.0px,0) scaleX(0.8326);color:#1c1c1c">JBKBinarySearch</span>
<span class="t" style="left:37px;top:202px;font-size:9.6px;transform:translate3d(0.4px,0.05px,0) scaleX(0.8818);color:#1c1c1c">JbkCollectionEx</span>
<span class="t" style="left:37px;top:215px;font-size:9.6px;transform:translate3d(0.4px,0.1px,0) scaleX(0.8425);color:#1c1c1c">JBKFirstJavaProgram</span>
<span class="t" style="left:217px;top:63px;font-size:9.6px;transform:translate3d(0px,0.7px,0) scaleX(0.8466);color:#1c1c24">JbkSequentialSearchEx.java</span>
<span class="t m" style="left:214px;top:81px;font-size:8.8px;transform:translate3d(0.4px,0.0px,0) scaleX(0.9467);color:#747474">1</span>
<span class="t m" style="left:214px;top:91px;font-size:8.8px;transform:translate3d(0.4px,0.85px,0) scaleX(0.9467);color:#747474">2</span>
<span class="t m" style="left:214px;top:102px;font-size:8.8px;transform:translate3d(0.4px,0.7px,0) scaleX(0.9467);color:#747474">3</span>
<span class="t m" style="left:214px;top:113px;font-size:8.8px;transform:translate3d(0.4px,0.55px,0) scaleX(0.9467);color:#747474">4</span>
<span class="t m" style="left:214px;top:124px;font-size:8.8px;transform:translate3d(0.4px,0.4px,0) scaleX(0.9467);color:#747474">5</span>
<span class="t m" style="left:214px;top:135px;font-size:8.8px;transform:translate3d(0.4px,0.25px,0) scaleX(0.9467);color:#747474">6</span>
<span class="t m" style="left:214px;top:146px;font-size:8.8px;transform:translate3d(0.4px,0.1px,0) scaleX(0.9467);color:#747474">7</span>
<div class="g"><span class="t m b" style="left:228px;top:80px;font-size:9px;transform:translate3d(0.6px,0.8px,0) scaleX(0.9383);color:#7c2060">package </span><span class="t m" style="left:269px;top:80px;font-size:9px;transform:translate3d(0.6px,0.8px,0) scaleX(0.9467);color:#101010">com.javabykiran.sequentialsearch;</span></div>
<div class="g"><span class="t m b" style="left:228px;top:102px;font-size:9px;transform:translate3d(0.6px,0.5px,0) scaleX(0.9365);color:#7c2060">public </span><span class="t m b" style="left:264px;top:102px;font-size:9px;transform:translate3d(0.48px,0.5px,0) scaleX(0.9335);color:#7c2060">class </span><span class="t m" style="left:295px;top:102px;font-size:9px;transform:translate3d(0.23px,0.5px,0) scaleX(0.9456);color:#101010">JbkSequentialSearchEx {</span></div>
<div class="g"><span class="t m" style="left:228px;top:135px;font-size:9px;transform:translate3d(0.6px,0.95px,0) scaleX(0.8731);color:#101010">}</span></div>
<span class="t" style="left:217px;top:394px;font-size:9.6px;transform:translate3d(0px,0.8px,0) scaleX(0.8882);color:#989aa4">Problems</span>
<span class="t" style="left:275px;top:394px;font-size:9.6px;transform:translate3d(0.6px,0.8px,0) scaleX(0.8395);color:#989aa4">Javadoc</span>
<span class="t" style="left:328px;top:394px;font-size:9.6px;transform:translate3d(0px,0.8px,0) scaleX(0.886);color:#989aa4">Declaration</span>
<span class="t" style="left:393px;top:394px;font-size:9.6px;transform:translate3d(0px,0.8px,0) scaleX(0.8806);color:#22222e">Console</span>
<span class="t" style="left:201px;top:411px;font-size:9.6px;transform:translate3d(0px,0.0px,0) scaleX(0.9071);color:#111">No consoles to display at this time.</span>
<span class="t" style="left:564px;top:521px;font-size:9.6px;transform:translate3d(0.4px,0.6px,0) scaleX(0.9196);color:#222">Writable</span>
<span class="t" style="left:640px;top:521px;font-size:9.6px;transform:translate3d(0.6px,0.6px,0) scaleX(0.8766);color:#222">Smart Insert</span>
<span class="t" style="left:712px;top:521px;font-size:9.6px;transform:translate3d(0px,0.6px,0) scaleX(0.8202);color:#222">3 : 26 : 70</span>
</div></body></html>
